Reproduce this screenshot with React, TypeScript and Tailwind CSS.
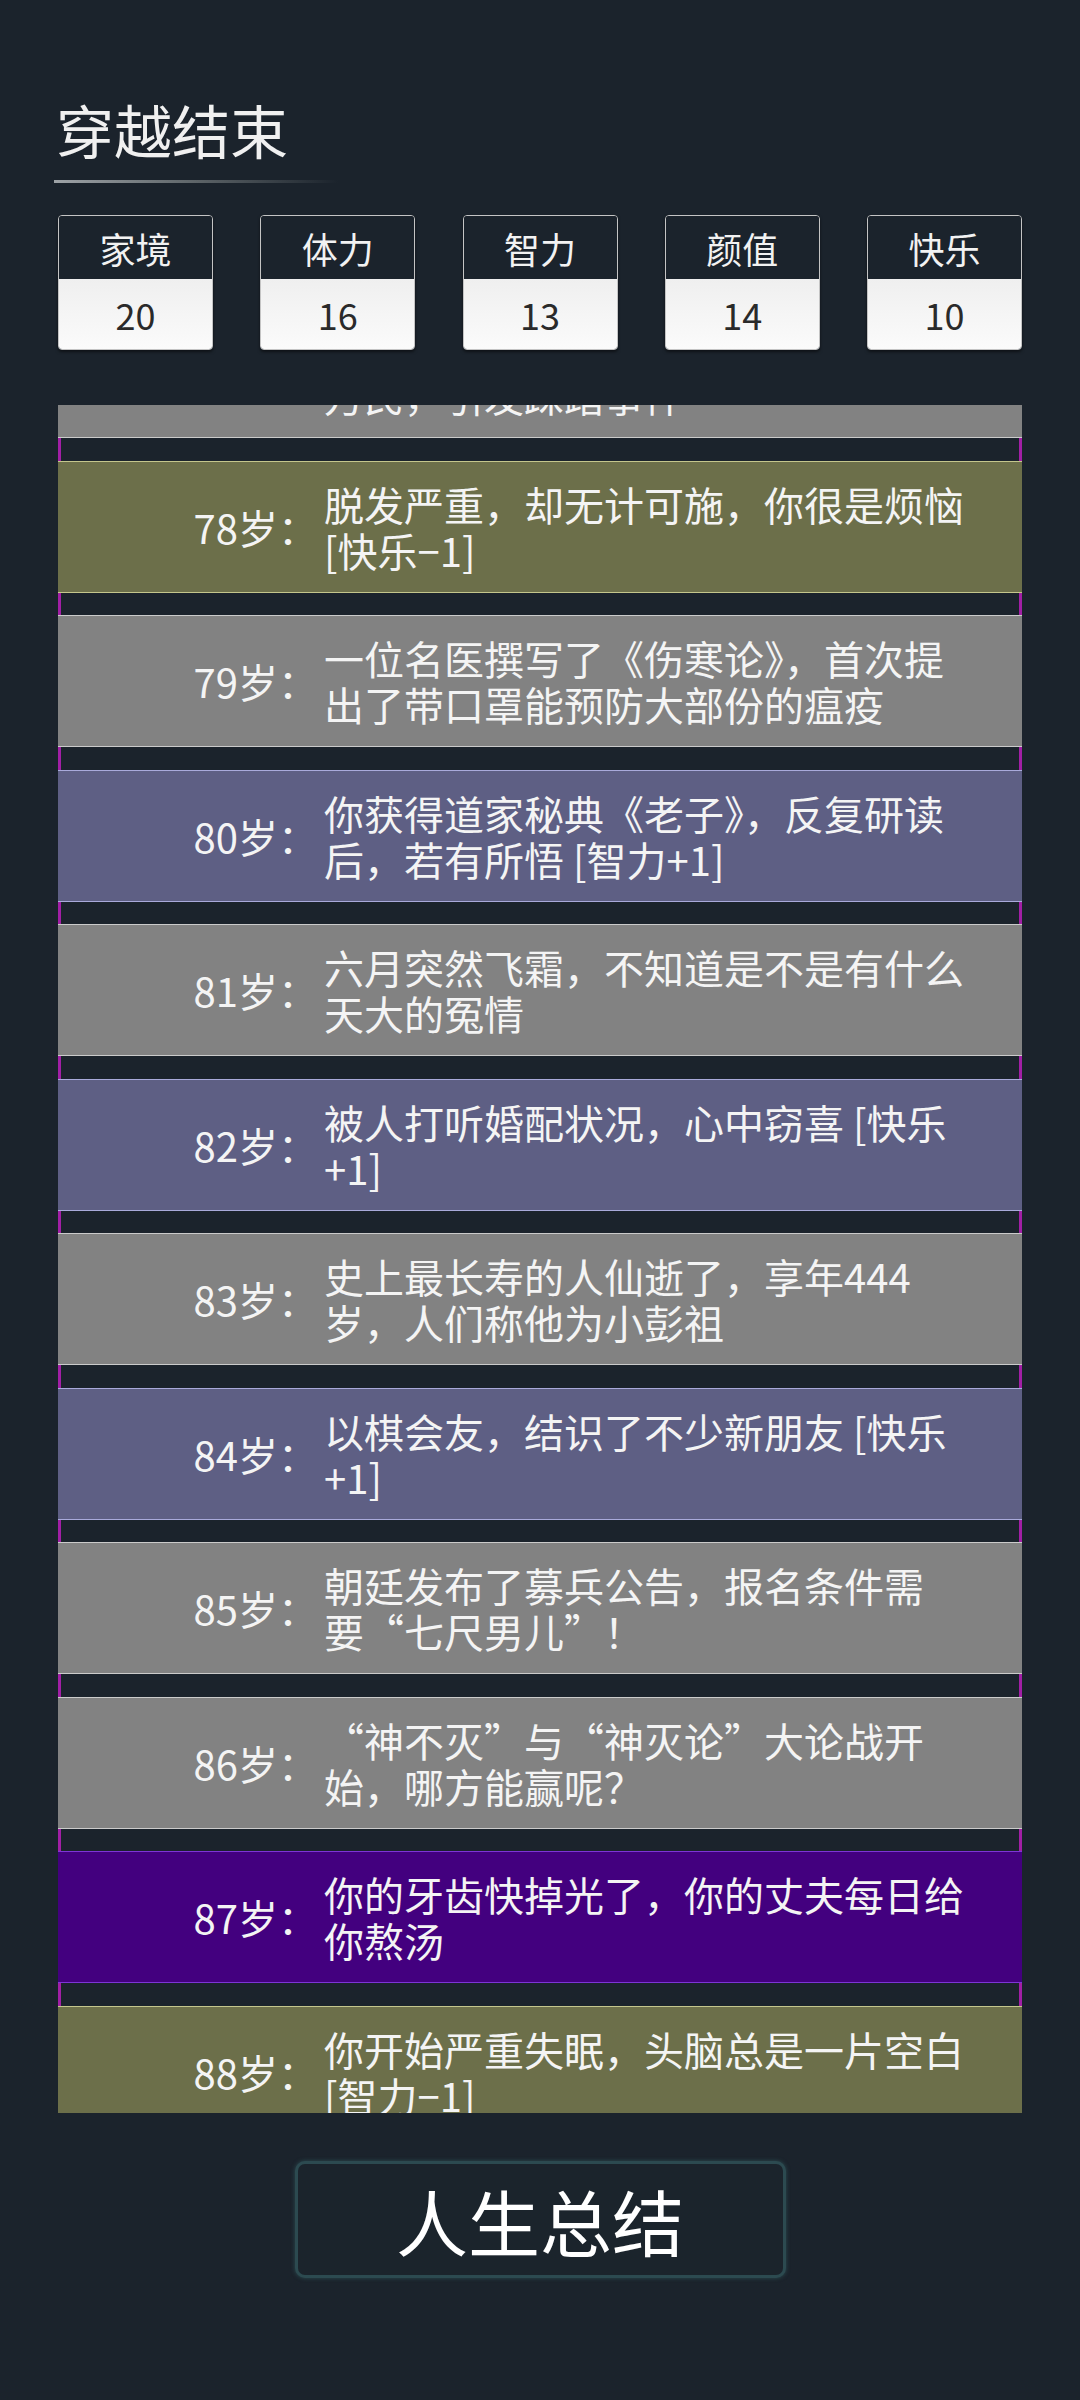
import React from "react";

type Tone = "gray" | "olive" | "slate" | "violet";

const tones: Record<Tone, string> = {
  gray: "bg-[#828282] border-[#cbcbcb]",
  olive: "bg-[#6c6f4a] border-[#c4c68c]",
  slate: "bg-[#5e5f84] border-[#a9aadb]",
  violet: "bg-[#43007f] border-[#7d35d6]",
};

const stats = [
  { label: "家境", value: 20 },
  { label: "体力", value: 16 },
  { label: "智力", value: 13 },
  { label: "颜值", value: 14 },
  { label: "快乐", value: 10 },
];

const events: { age: number; tone: Tone; lines: string[] }[] = [
  { age: 78, tone: "olive", lines: ["脱发严重，却无计可施，你很是烦恼", "[快乐−1]"] },
  { age: 79, tone: "gray", lines: ["一位名医撰写了《伤寒论》，首次提", "出了带口罩能预防大部份的瘟疫"] },
  { age: 80, tone: "slate", lines: ["你获得道家秘典《老子》，反复研读", "后，若有所悟 [智力+1]"] },
  { age: 81, tone: "gray", lines: ["六月突然飞霜，不知道是不是有什么", "天大的冤情"] },
  { age: 82, tone: "slate", lines: ["被人打听婚配状况，心中窃喜 [快乐", "+1]"] },
  { age: 83, tone: "gray", lines: ["史上最长寿的人仙逝了，享年444", "岁，人们称他为小彭祖"] },
  { age: 84, tone: "slate", lines: ["以棋会友，结识了不少新朋友 [快乐", "+1]"] },
  { age: 85, tone: "gray", lines: ["朝廷发布了募兵公告，报名条件需", "要“七尺男儿”！"] },
  { age: 86, tone: "gray", lines: ["“神不灭”与“神灭论”大论战开", "始，哪方能赢呢？"] },
  { age: 87, tone: "violet", lines: ["你的牙齿快掉光了，你的丈夫每日给", "你熬汤"] },
  { age: 88, tone: "olive", lines: ["你开始严重失眠，头脑总是一片空白", "[智力−1]"] },
];

function StatBox({ label, value }: { label: string; value: number }) {
  return (
    <div className="w-[155px] rounded-[4px] border border-[#c4c4c4] overflow-hidden shadow-[0_2px_3px_rgba(0,0,0,0.5)]">
      <div className="h-[63px] flex items-center justify-center bg-[#1b232c] text-[36px] leading-none text-[#f2f2f2]">
        {label}
      </div>
      <div className="h-[70px] flex items-center justify-center bg-gradient-to-b from-[#efefef] to-[#fbfbfb] text-[36px] leading-none text-[#2a2a2a]">
        {value}
      </div>
    </div>
  );
}

function Gap() {
  return <div className="h-[22.5px] border-x-[3px] border-[#a21fa6] bg-[#1b232c]" />;
}

function EventRow({ age, tone, lines }: { age: number; tone: Tone; lines: string[] }) {
  return (
    <>
      <div className={`h-[132px] flex items-center border-y ${tones[tone]} text-[40px] text-[#f4f4f4]`}>
        <div className="w-[260px] shrink-0 text-right leading-none">{age}岁：</div>
        <div className="ml-[6px] whitespace-nowrap leading-[46px]">
          {lines[0]}
          <br />
          {lines[1]}
        </div>
      </div>
      <Gap />
    </>
  );
}

export default function App() {
  return (
    <div
      lang="zh-CN"
      className="min-h-[2400px] bg-[#1b232c] px-[58px] pt-[100px] font-['Noto_Sans_CJK_SC','Noto_Sans',sans-serif]"
    >
      <h1 className="-ml-[2px] text-[58px] leading-none text-[#f0f0f0]">穿越结束</h1>
      <div className="mt-[22px] -ml-[4px] h-[3px] w-[284px] bg-gradient-to-r from-[#9ea3a7] via-[#5d6468] to-transparent" />

      <div className="mt-[32px] flex justify-between">
        {stats.map((s) => (
          <StatBox key={s.label} label={s.label} value={s.value} />
        ))}
      </div>

      <div className="mt-[55px] h-[1708px] overflow-hidden">
        {/* tail of the 77岁 entry, scrolled mostly out of view */}
        <div className="h-[33px] flex items-end overflow-hidden border-b border-[#cbcbcb] bg-[#828282] pb-[19px] pl-[266px] text-[40px] text-[#f4f4f4]">
          <div className="shrink-0 whitespace-nowrap leading-[46px]">万民，引发踩踏事件</div>
        </div>
        <Gap />
        {events.map((e) => (
          <EventRow key={e.age} age={e.age} tone={e.tone} lines={e.lines} />
        ))}
      </div>

      <div className="mt-[48px] flex justify-center">
        <button className="w-[491px] h-[117px] rounded-[10px] border-[3px] border-[#2c4a50] bg-[#1b242c] shadow-[0_0_4px_rgba(60,120,120,0.5)] text-[72px] leading-none text-white">
          人生总结
        </button>
      </div>
    </div>
  );
}
